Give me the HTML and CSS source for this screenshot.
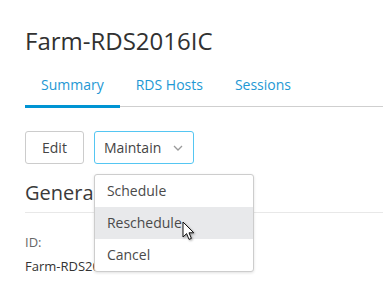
FILE: index.html
```html
<!DOCTYPE html>
<html lang="en">
<head>
    <meta charset="UTF-8">
    <title>Farm-RDS2016IC</title>
    <link rel="stylesheet" href="styles.css">
</head>
<body>
<div class="page">
    <h1 class="page-title">Farm-RDS2016IC</h1>

    <ul class="tabs">
        <li class="tab tab-active">Summary</li>
        <li class="tab">RDS Hosts</li>
        <li class="tab">Sessions</li>
    </ul>

    <div class="toolbar">
        <button class="btn">Edit</button>
        <div class="btn-wrap">
            <button class="btn btn-focus">Maintain
                <svg class="caret" width="10" height="6" viewBox="0 0 10 6"><path d="M1 1 L5 5 L9 1" fill="none" stroke="#9a9a9a" stroke-width="1.3"/></svg>
            </button>
            <ul class="menu">
                <li class="menu-item">Schedule</li>
                <li class="menu-item menu-hover">Reschedule
                    <svg class="cursor" width="14" height="21" viewBox="0 0 14 21"><path d="M1 1 L1 16 L4.6 12.6 L7 18.4 L9.4 17.4 L7 11.8 L11.8 11.8 Z" fill="#fff" stroke="#111" stroke-width="1" stroke-linejoin="round"/></svg>
                </li>
                <li class="menu-item">Cancel</li>
            </ul>
        </div>
    </div>

    <h2 class="section-title">General</h2>
    <div class="field-label">ID:</div>
    <div class="field-value">Farm-RDS2016IC</div>
</div>
</body>
</html>
```

FILE: styles.css
```css
body {
    margin: 0;
    font-family: "Open Sans", "Liberation Sans", sans-serif;
    color: #333;
    background: #fff;
}
.page {
    padding-left: 25px;
}
.page-title {
    margin: 25px 0 0;
    font-size: 24px;
    line-height: 32px;
    font-weight: 400;
    color: #313131;
}
.tabs {
    display: flex;
    margin: 18px 0 0;
    padding: 0;
    list-style: none;
    border-bottom: 1px solid #cfcfcf;
}
.tab {
    padding: 0 16px 10px;
    font-size: 14px;
    line-height: 20px;
    color: #1e98d4;
    border-bottom: 3px solid transparent;
    margin-bottom: -2px;
}
.tab-active {
    border-bottom-color: #0094d3;
}
.toolbar {
    display: flex;
    gap: 10px;
    margin-top: 24px;
}
.btn {
    display: flex;
    align-items: center;
    height: 33px;
    padding: 0 16px;
    border: 1px solid #ccc;
    border-radius: 3px;
    background: #fff;
    font-family: inherit;
    font-size: 14px;
    color: #444;
}
.btn-focus {
    padding: 0 10px 0 9px;
    border-color: #55c6f2;
}
.caret {
    margin-left: 12px;
}
.btn-wrap {
    position: relative;
}
.menu {
    position: absolute;
    top: 43px;
    left: 0;
    z-index: 2;
    width: 158px;
    margin: 0;
    padding: 0;
    list-style: none;
    background: #fff;
    border: 1px solid #cdcdcd;
    border-radius: 3px;
    box-shadow: 0 1px 3px rgba(0, 0, 0, 0.12);
}
.menu-item {
    position: relative;
    height: 32px;
    padding-left: 12px;
    font-size: 14px;
    line-height: 32px;
    color: #4a4a4a;
}
.menu-hover {
    background: #e8e9eb;
}
.cursor {
    position: absolute;
    left: 87px;
    top: 14px;
    filter: drop-shadow(1px 1px 1px rgba(0, 0, 0, 0.35));
}
.section-title {
    margin: 15px 0 0;
    padding-bottom: 5px;
    font-size: 20px;
    line-height: 28px;
    font-weight: 400;
    color: #3a3a3a;
    border-bottom: 1px solid #e8e8e8;
}
.field-label {
    margin-top: 20px;
    font-size: 13px;
    line-height: 18px;
    color: #666;
}
.field-value {
    margin-top: 6px;
    font-size: 13px;
    line-height: 18px;
    color: #333;
}
```
